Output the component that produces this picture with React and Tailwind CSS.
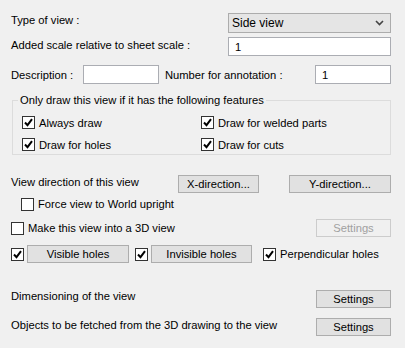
const font = { fontFamily: "'Liberation Sans', Arial, sans-serif" };

function Check({ checked, label, className = "" }) {
  return (
    <div className={"flex items-center " + className}>
      <span className="flex h-[13px] w-[13px] shrink-0 items-center justify-center border border-[#333333] bg-white">
        {checked && (
          <svg width="9" height="9" viewBox="0 0 9 9">
            <path d="M1 4.5 L3.5 7.2 L8 1.2" fill="none" stroke="#000" strokeWidth="2" />
          </svg>
        )}
      </span>
      {label && <span className="ml-[4px]">{label}</span>}
    </div>
  );
}

function Btn({ children, className = "", disabled }) {
  return (
    <div
      className={
        "flex items-center justify-center border " +
        (disabled
          ? "border-[#cccccc] bg-[#f0f0f0] text-[#a0a0a0] "
          : "border-[#adadad] bg-[#e1e1e1] text-black ") +
        className
      }
    >
      {children}
    </div>
  );
}

function Field({ value, className = "" }) {
  return (
    <div className={"flex items-center border border-[#abadb3] bg-white pl-[6px] " + className}>
      {value}
    </div>
  );
}

export default function App() {
  return (
    <div
      className="h-[348px] w-[405px] overflow-hidden bg-[#f0f0f0] pl-[11px] pr-[14px] pt-[13px] text-[11.2px] leading-[14px] text-black"
      style={font}
    >
      <div className="flex h-[20px] items-center justify-between">
        <span className="-mt-[6px]">Type of view :</span>
        <div className="flex h-[20px] w-[163px] items-center justify-between border border-[#acacac] bg-[#e5e5e5] pl-[3px] pr-[6px] text-[12px]">
          <span>Side view</span>
          <svg width="9" height="6" viewBox="0 0 9 6">
            <path d="M1 1 L4.5 4.5 L8 1" fill="none" stroke="#444" strokeWidth="1.6" />
          </svg>
        </div>
      </div>

      <div className="mt-[4px] flex h-[19px] items-center justify-between">
        <span className="-mt-[4px]">Added scale relative to sheet scale :</span>
        <Field value="1" className="h-[19px] w-[163px]" />
      </div>

      <div className="mt-[9px] flex h-[19px] items-center">
        <span className="w-[72px]">Description :</span>
        <Field value="" className="h-[19px] w-[76px]" />
        <span className="ml-[6px]">Number for annotation :</span>
        <Field value="1" className="ml-auto h-[19px] w-[76px]" />
      </div>

      <div className="relative ml-[1px] mt-[16px] h-[55px] border border-[#dcdcdc]">
        <span className="absolute -top-[8px] left-[5px] bg-[#f0f0f0] px-[2px]">
          Only draw this view if it has the following features
        </span>
        <div className="grid grid-cols-[179px_1fr] gap-y-[9px] pl-[9px] pt-[15px]">
          <Check checked label="Always draw" className="h-[13px]" />
          <Check checked label="Draw for welded parts" className="h-[13px]" />
          <Check checked label="Draw for holes" className="h-[13px]" />
          <Check checked label="Draw for cuts" className="h-[13px]" />
        </div>
      </div>

      <div className="mt-[20px] flex h-[18px] items-center">
        <span className="-mt-[5px] w-[167px]">View direction of this view</span>
        <Btn className="h-[18px] w-[81px]">X-direction...</Btn>
        <Btn className="ml-auto h-[18px] w-[102px]">Y-direction...</Btn>
      </div>

      <Check label="Force view to World upright" className="ml-[10px] mt-[4px] h-[14px]" />

      <div className="mt-[8px] flex h-[18px] items-center justify-between">
        <Check label="Make this view into a 3D view" />
        <Btn disabled className="h-[18px] w-[75px]">Settings</Btn>
      </div>

      <div className="mt-[8px] flex h-[18px] items-center">
        <Check checked />
        <Btn className="ml-[3px] h-[18px] w-[102px]">Visible holes</Btn>
        <Check checked className="ml-[6px]" />
        <Btn className="ml-[3px] h-[18px] w-[101px]">Invisible holes</Btn>
        <Check checked label="Perpendicular holes" className="ml-[11px]" />
      </div>

      <div className="mt-[27px] flex h-[18px] items-center justify-between">
        <span className="-mt-[6px]">Dimensioning of the view</span>
        <Btn className="h-[18px] w-[75px]">Settings</Btn>
      </div>

      <div className="mt-[10px] flex h-[18px] items-center justify-between">
        <span className="-mt-[4px]">Objects to be fetched from the 3D drawing to the view</span>
        <Btn className="h-[18px] w-[75px]">Settings</Btn>
      </div>
    </div>
  );
}
